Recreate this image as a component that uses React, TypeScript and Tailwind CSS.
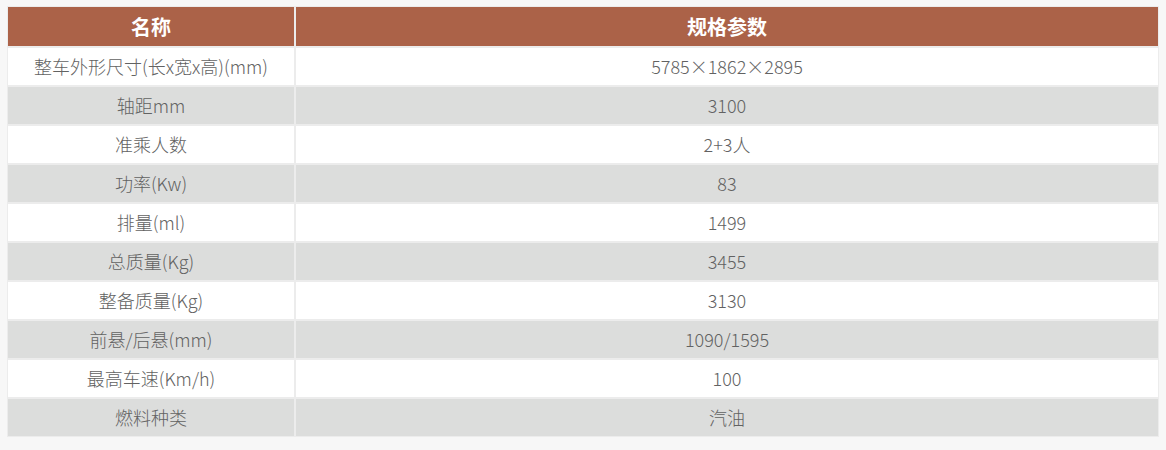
const rows: [string, string][] = [
  ['整车外形尺寸(长x宽x高)(mm)', '5785×1862×2895'],
  ['轴距mm', '3100'],
  ['准乘人数', '2+3人'],
  ['功率(Kw)', '83'],
  ['排量(ml)', '1499'],
  ['总质量(Kg)', '3455'],
  ['整备质量(Kg)', '3130'],
  ['前悬/后悬(mm)', '1090/1595'],
  ['最高车速(Km/h)', '100'],
  ['燃料种类', '汽油'],
];

export default function App() {
  return (
    <div
      className="min-h-[450px] w-[1166px] bg-[#f7f7f7] pl-[7px] pt-[6px]"
      style={{ fontFamily: '"Noto Sans CJK SC", "Noto Sans", sans-serif' }}
    >
      <div className="grid w-[1152px] grid-cols-[286px_1fr] gap-[2px] bg-[#ececec] p-px">
        <div className="flex h-[39px] items-center justify-center bg-[#ab6248] text-[20px] font-bold text-white">
          名称
        </div>
        <div className="flex h-[39px] items-center justify-center bg-[#ab6248] text-[20px] font-bold text-white">
          规格参数
        </div>
        {rows.map(([name, value], i) => {
          const bg = i % 2 === 0 ? 'bg-white' : 'bg-[#dcdddc]';
          return [
            <div
              key={`${i}-n`}
              className={`flex h-[37px] items-center justify-center text-[18px] font-light text-[#626262] ${bg}`}
            >
              {name}
            </div>,
            <div
              key={`${i}-v`}
              className={`flex h-[37px] items-center justify-center text-[18px] font-light text-[#626262] ${bg}`}
            >
              {value}
            </div>,
          ];
        })}
      </div>
    </div>
  );
}
